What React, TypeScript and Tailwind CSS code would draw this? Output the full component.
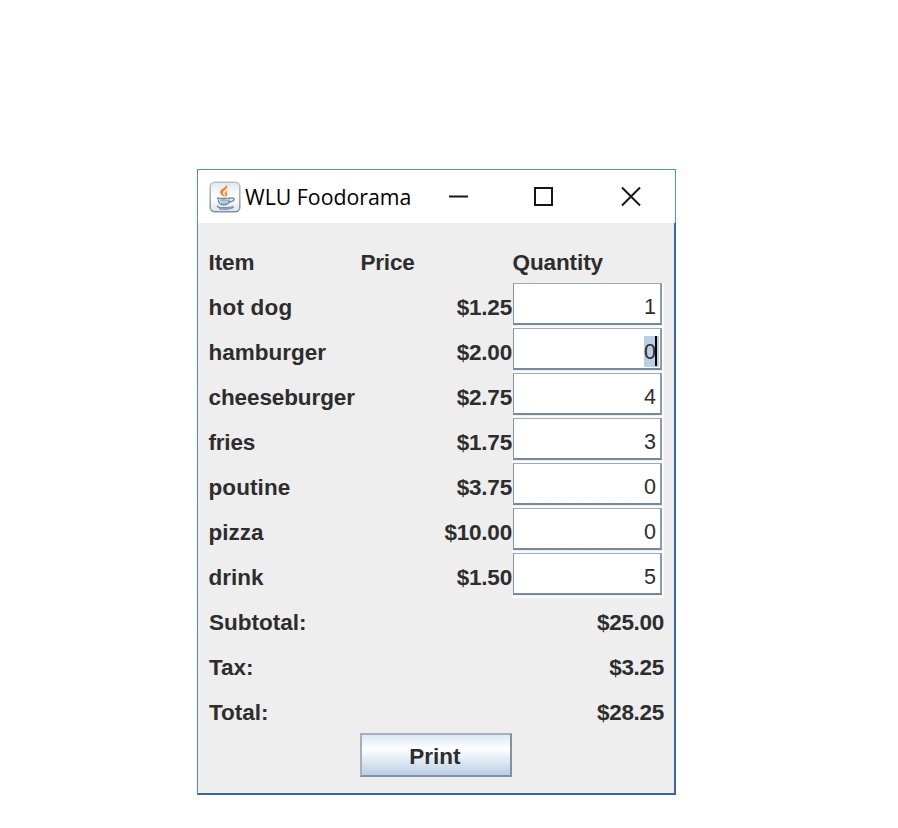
import React from 'react';

const items = [
  { name: 'hot dog', price: '$1.25', qty: '1', tracking: 'tracking-[0.2px]' },
  { name: 'hamburger', price: '$2.00', qty: '0', tracking: 'tracking-[0px]', selected: true },
  { name: 'cheeseburger', price: '$2.75', qty: '4', tracking: 'tracking-[-0.1px]' },
  { name: 'fries', price: '$1.75', qty: '3', tracking: 'tracking-[-0.2px]' },
  { name: 'poutine', price: '$3.75', qty: '0', tracking: 'tracking-[0.1px]' },
  { name: 'pizza', price: '$10.00', qty: '0', tracking: 'tracking-[0px]' },
  { name: 'drink', price: '$1.50', qty: '5', tracking: 'tracking-[0px]' },
];

const totals = [
  { label: 'Subtotal:', value: '$25.00' },
  { label: 'Tax:', value: '$3.25' },
  { label: 'Total:', value: '$28.25' },
];

function JavaIcon() {
  return (
    <svg width="32" height="32" viewBox="0 0 32 32" fill="none" className="shrink-0">
      <defs>
        <linearGradient id="tile" x1="0" y1="0" x2="0" y2="1">
          <stop offset="0" stopColor="#e3e8ed" />
          <stop offset="0.5" stopColor="#ffffff" />
          <stop offset="1" stopColor="#dfe4e9" />
        </linearGradient>
        <linearGradient id="tileEdge" x1="0" y1="0" x2="0" y2="1">
          <stop offset="0" stopColor="#b9c2cc" />
          <stop offset="1" stopColor="#7f90a2" />
        </linearGradient>
      </defs>
      <rect x="1.2" y="1.2" width="29.6" height="29.6" rx="4.5" fill="url(#tile)" stroke="url(#tileEdge)" strokeWidth="1.5" />
      <path d="M17.500 4c1.300 2.800-.5 4-2.600 5.700-1.900 1.600-1.500 3.200 1.200 6.300-4.700-2.300-6.400-4.700-3.300-7.400C15 6.700 17.300 6.200 17.500 4Z" fill="#e8832b" stroke="#e8832b" strokeWidth="0.5" />
      <path d="M21 8.300c-3 .8-4 2.200-2.900 3.800.9 1.200.5 2.200-.9 3.900-1.500-1.900-2.300-3.300-1-4.900 1.200-1.500 2.700-2.300 4.800-2.800Z" fill="#ec9747" />
      <path d="M8 17c2.500 1 11 1 13.500 0" stroke="#708ca8" strokeWidth="1.800" />
      <path d="M9.300 18.500c.3 3 1.500 4.500 3.500 5 1.500.3 3.500.3 5-.2 1.500-.6 2.500-2.500 2.700-4.800M21.500 17.200c5-1 5 3-1.300 4" stroke="#708ca8" strokeWidth="1.500" />
      <path d="M11 19.800h8.600M12 22h7" stroke="#9eb1c4" strokeWidth="1.600" />
      <path d="M9.500 24.800c-6 2 13 3 14.500-.1M10 27.800c5 .7 12 .3 15-1.600" stroke="#7892ac" strokeWidth="1.300" />
    </svg>
  );
}

function QuantityField({ value, selected }: { value: string; selected?: boolean }) {
  return (
    <div className="h-[45px] w-[152px] border-r-2 border-b-2 border-[#fafafa] pl-px">
      <div className="flex h-[42px] w-[149px] items-center justify-end border-t border-r-2 border-b-2 border-l border-t-[#9eabb9] border-r-[#8d9bab] border-b-[#77889b] border-l-[#8796a6] bg-white pr-px">
        {selected ? (
          <span className="mt-[5px] flex h-[31px] items-center bg-[#b8cfe5] pr-[2px] text-[21.5px] font-normal">
            <span className="mt-[2px]">{value}</span>
            <span className="-ml-px h-[30px] w-[2px] bg-black" />
          </span>
        ) : (
          <span className="pt-[7px] pr-[3px] text-[21.5px] font-normal">{value}</span>
        )}
      </div>
    </div>
  );
}

export default function App() {
  return (
    <div className="h-[828px] w-[898px] overflow-hidden bg-white pt-[169px] pl-[197px] font-['Liberation_Sans',Arial,sans-serif] text-[#2d2d2d]">
      <div className="flex h-[626px] w-[479px] flex-col border border-[#4f8fd8]">
        <header className="flex h-[53px] shrink-0 items-center bg-white pl-[11px] text-black">
          <JavaIcon />
          <h1 className="ml-[4px] w-[188px] whitespace-nowrap pt-px font-['Open_Sans','Noto_Sans',sans-serif] text-[21.3px] leading-[30px]">WLU Foodorama</h1>
          <svg width="240" height="53" viewBox="0 0 240 53" fill="none" stroke="#171717" strokeWidth="2" className="shrink-0">
            <path d="M16 26.500h19" />
            <path d="M102 18h17v17h-17z" />
            <path d="m189 17.500 18 18m0-18-18 18" />
          </svg>
        </header>
        <main className="-mr-px -mb-px flex-1 border-r-2 border-b-2 border-[#3c6699] bg-[#eeeeee] pt-[15px] pl-[10px] text-[22.5px] leading-[26px] font-bold">
          <div className="grid w-[456px] grid-cols-3 auto-rows-[45px]">
            <span className="pt-[12px] pl-[0.5px] tracking-[-0.1px]">Item</span>
            <span className="pt-[12px] pl-[0.5px] tracking-[-0.2px]">Price</span>
            <span className="pt-[12px] pl-[0.5px] tracking-[-0.1px]">Quantity</span>
            {items.map((item) => (
              <React.Fragment key={item.name}>
                <span className={`pt-[12px] pl-[0.5px] ${item.tracking}`}>{item.name}</span>
                <span className="pt-[12px] text-right tracking-[-0.2px]">{item.price}</span>
                <QuantityField value={item.qty} selected={item.selected} />
              </React.Fragment>
            ))}
            {totals.map((row) => (
              <React.Fragment key={row.label}>
                <span className="col-span-2 pt-[12px] pl-px tracking-[0px]">{row.label}</span>
                <span className="pt-[12px] text-right tracking-[-0.3px]">{row.value}</span>
              </React.Fragment>
            ))}
            <button className="col-start-2 h-[44px] w-[152px] border-2 border-t-[#a4b0bf] border-r-[#8191a5] border-b-[#8191a5] border-l-[#a4b0bf] bg-linear-to-b from-[#dde8f3] via-white via-35% to-[#b8cfe5] pt-[4px] pr-[2px] text-center">
              Print
            </button>
          </div>
        </main>
      </div>
    </div>
  );
}
